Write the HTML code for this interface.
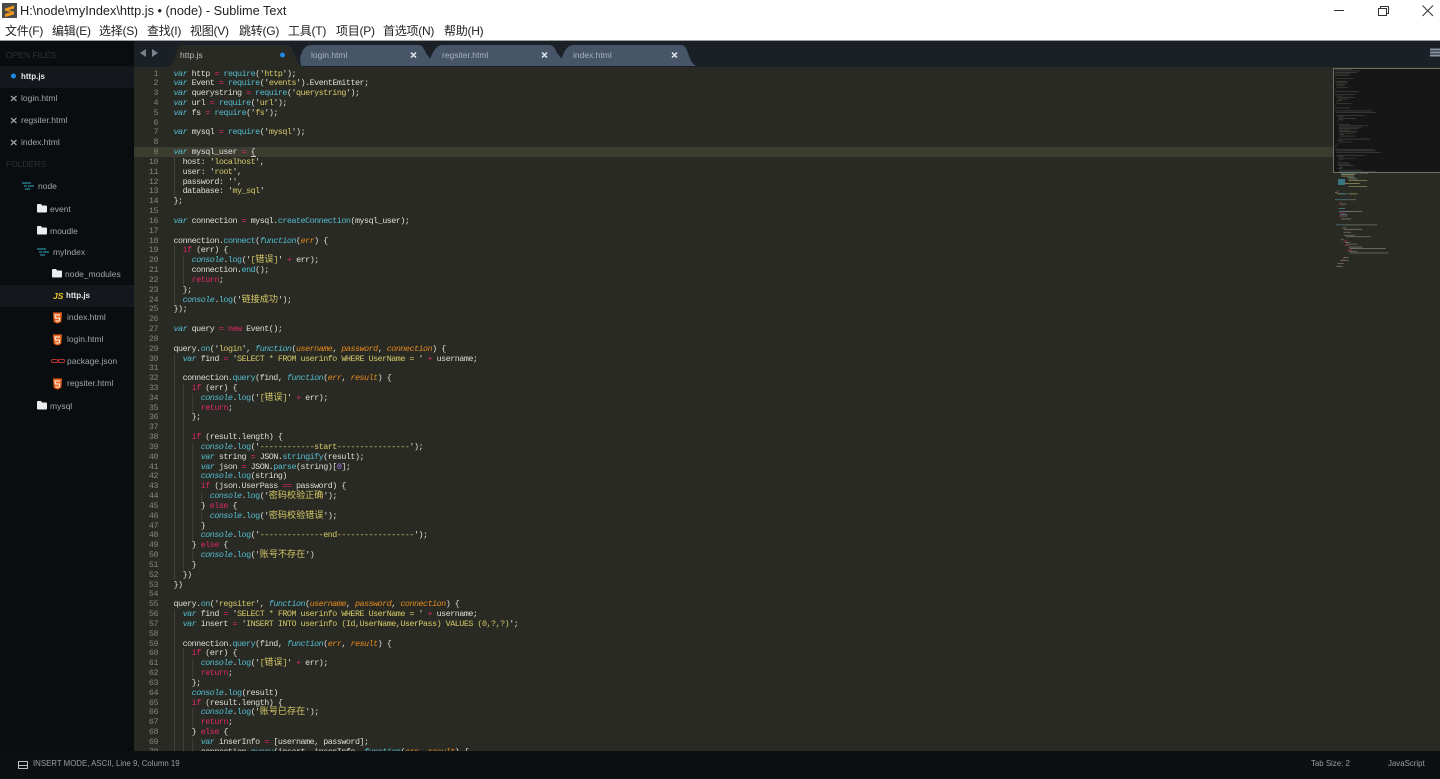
<!DOCTYPE html>
<html><head><meta charset="utf-8"><title>Sublime Text</title>
<style>
html,body{margin:0;padding:0;width:1440px;height:779px;overflow:hidden;background:#2a2a24;font-family:"Liberation Sans","Noto Sans CJK SC",sans-serif}
.a{position:absolute;white-space:nowrap}
#top{position:absolute;left:0;top:0;width:1440px;height:40px;background:#fff;border-bottom:1px solid #9a9c9e}
.m{position:absolute;top:24px;font-size:12px;line-height:15px;color:#222;white-space:nowrap;letter-spacing:-.25px}
#side{position:absolute;left:0;top:41px;width:134px;height:710px;background:#0a0d10;overflow:hidden}
.r{position:absolute;left:0;width:134px;height:22px;background:#14181c}
.t{position:absolute;font-size:8.5px;line-height:12px;color:#a2a6a8;white-space:nowrap}
.h{position:absolute;font-size:8.5px;line-height:12px;color:#2c3238;white-space:nowrap}
#tabs{position:absolute;left:134px;top:41px;width:1306px;height:26px;background:#1a2026}
#code{position:absolute;left:134px;top:67px;width:1306px;height:684px;background:#2a2a24;overflow:hidden}
pre{margin:0;position:absolute;top:2.5px;font-family:"Liberation Mono","Noto Sans CJK SC",monospace;font-size:8.4px;letter-spacing:-.49px;line-height:9.83px}
#nums{left:0;width:24px;text-align:right;color:#85857c}
#src{left:39.5px;color:#dededa}
pre s{text-decoration:none;color:#d4c968}
pre b{font-weight:normal;color:#dc2868}
pre u{text-decoration:none;color:#52bcd0}
pre i{color:#52bcd0}
pre q{quotes:none;font-style:italic;color:#e48a1c}
pre em{font-style:normal;font-size:9.1px;letter-spacing:0;line-height:0}
#st{position:absolute;left:0;top:751px;width:1440px;height:28px;background:#0c1013}
.st{position:absolute;top:7px;font-size:7.85px;line-height:12px;color:#9a9ea0;white-space:nowrap}
.tn{position:absolute;top:8px;font-size:8.5px;line-height:12px;color:#a9b1bc;white-space:nowrap}
</style></head><body>
<div id="top">
<svg class="a" style="left:2px;top:3px" width="15" height="15" viewBox="0 0 15 15"><rect width="15" height="15" fill="#4a4a4a"/><path d="M3 5.500 12 2.500V5.500L6.500 7.200 12 8.800V11.500L3 14V11L8.500 9.200 3 7.600Z" fill="#f09a1c"/></svg>
<div class="a" style="left:20px;top:3px;font-size:12.75px;line-height:16px;color:#222">H:\node\myIndex\http.js • (node) - Sublime Text</div>
<div class="m" style="left:5px">文件(F)</div><div class="m" style="left:52px">编辑(E)</div><div class="m" style="left:99px">选择(S)</div><div class="m" style="left:147px">查找(I)</div><div class="m" style="left:190px">视图(V)</div><div class="m" style="left:239px">跳转(G)</div><div class="m" style="left:288px">工具(T)</div><div class="m" style="left:336px">项目(P)</div><div class="m" style="left:383px">首选项(N)</div><div class="m" style="left:444px">帮助(H)</div>
<svg class="a" style="left:1330px;top:0" width="110" height="20" viewBox="0 0 110 20" fill="none" stroke="#333" stroke-width="1"><path d="M4 10.500H14"/><path d="M48.500 8.500H56.500V15.500H48.500ZM50.500 8V6.500H58.500V13.500H57"/><path d="M92.500 5.500 103 16M103 5.500 92.500 16"/></svg>
</div>

<div id="side">
<div class="h" style="left:6px;top:8px">OPEN FILES</div>
<div class="r" style="top:25px"></div>
<svg class="a" style="left:0;top:0" width="134" height="710" viewBox="0 0 134 710">
<circle cx="13.500" cy="35" r="2.500" fill="#1e88e5"/>
<path d="M11 55 16.500 60M16.500 55 11 60M11 77 16.500 82M16.500 77 11 82M11 99 16.500 104M16.500 99 11 104" stroke="#a0a4a8" stroke-width="1.200" fill="none"/>
</svg>
<div class="t" style="left:21px;top:30px;color:#e6e8ea;font-weight:bold;font-size:8px">http.js</div>
<div class="t" style="left:21px;top:51px">login.html</div>
<div class="t" style="left:21px;top:73px">regsiter.html</div>
<div class="t" style="left:21px;top:95px">index.html</div>
<div class="h" style="left:6px;top:117px">FOLDERS</div>
<div class="r" style="top:244px"></div>
<svg class="a" style="left:0;top:0" width="134" height="710" viewBox="0 0 134 710">
<path d="M22 142h9M24 145h3M28 145h6M25 148h5" stroke="#2a8a9c" stroke-width="1.300" fill="none"/>
<path d="M37 164q0-1 1-1h3l1 1.500h4q1 0 1 1v5q0 1-1 1h-8q-1 0-1-1ZM37 186q0-1 1-1h3l1 1.500h4q1 0 1 1v5q0 1-1 1h-8q-1 0-1-1ZM52 229q0-1 1-1h3l1 1.500h4q1 0 1 1v5q0 1-1 1h-8q-1 0-1-1ZM37 361q0-1 1-1h3l1 1.500h4q1 0 1 1v5q0 1-1 1h-8q-1 0-1-1Z" fill="#ececec"/>
<path d="M37 208h9M39 211h3M43 211h6M40 214h5" stroke="#2a8a9c" stroke-width="1.300" fill="none"/>
<path d="M53 271.500h9l-.8 9.500-3.700 1.500-3.700-1.500ZM53 293.500h9l-.8 9.500-3.700 1.500-3.700-1.500ZM53 337.500h9l-.8 9.500-3.700 1.500-3.700-1.500Z" fill="#e8641c"/>
<path d="M60 274h-5l.3 3h4.400l-.3 2.600-1.900.7-1.900-.7M60 296h-5l.3 3h4.400l-.3 2.600-1.900.7-1.900-.7M60 340h-5l.3 3h4.400l-.3 2.600-1.900.7-1.900-.7" fill="none" stroke="#fff" stroke-width=".9"/>
<path d="M52 318.500h5q1 1 0 3h-5q-1-2 0-3ZM59 318.500h5q1 1 0 3h-5q-1-2 0-3Z" fill="none" stroke="#b0322e" stroke-width="1.100"/>
<path d="M57 320h2" stroke="#b0322e" stroke-width="1"/>
</svg>
<div class="a" style="left:53px;top:249px;font-size:8.5px;line-height:12px;font-weight:bold;font-style:italic;color:#e8c92c">JS</div>
<div class="t" style="left:38px;top:139px">node</div>
<div class="t" style="left:50px;top:162px">event</div>
<div class="t" style="left:50px;top:184px">moudle</div>
<div class="t" style="left:53px;top:205px">myIndex</div>
<div class="t" style="left:65px;top:227px">node_modules</div>
<div class="t" style="left:66px;top:249px;color:#e6e8ea;font-weight:bold;font-size:8px">http.js</div>
<div class="t" style="left:67px;top:270px">index.html</div>
<div class="t" style="left:67px;top:292px">login.html</div>
<div class="t" style="left:67px;top:314px">package.json</div>
<div class="t" style="left:67px;top:336px">regsiter.html</div>
<div class="t" style="left:50px;top:359px">mysql</div>
</div>

<div id="tabs">
<svg class="a" style="left:0;top:0" width="1306" height="26" viewBox="0 0 1306 26">
<path d="M5 11 11 7V15ZM23 11 17 7V15Z" fill="#79828c" transform="translate(1 1)"/>
<path d="M167 25 166 17C168 10 170 4 178 4H284C289 4 290 8 292 12L296 17.500 298 25Z" fill="#475569"/>
<path d="M296 25V17.500C299 12 301 4 309 4H415C420 4 421 8 423 12L427.500 17.500V25Z" fill="#475569"/>
<path d="M427.500 25V17.500C430 12 432 4 440 4H546C551 4 552 7 554 12C556 18 558 24 563 25Z" fill="#475569"/>
<path d="M33 26C38 25 40 20 42 13C43 8 45 4 50 4H152C156 4 158 7 160 12C162 18 164 24 169 26Z" fill="#2a2a24"/>
<circle cx="148.500" cy="14" r="2.500" fill="#1e88e5"/>
<path d="M277 11.500 282 16.500M282 11.500 277 16.500M408 11.500 413 16.500M413 11.500 408 16.500M538 11.500 543 16.500M543 11.500 538 16.500" stroke="#e8ecf0" stroke-width="1.500" fill="none"/>
<path d="M1296 8.500h10M1296 11.500h10M1296 14.500h10" stroke="#8a94a0" stroke-width="2" fill="none"/>
</svg>
<div class="t" style="left:46px;top:8px;color:#b8bcbc">http.js</div>
<div class="tn" style="left:177px">login.html</div>
<div class="tn" style="left:308px">regsiter.html</div>
<div class="tn" style="left:439px">index.html</div>
</div>

<div id="code">
<div class="a" style="left:0;top:80px;width:1306px;height:10px;background:#3c3c30"></div>
<div class="a" style="left:117px;top:89px;width:5px;height:1px;background:#c8c8b8"></div>
<svg class="a" style="left:39.500px;top:2px" width="60" height="684" viewBox="0 0 60 684"><g transform="translate(.5 0) scale(4.55 9.83)" fill="none" stroke="#42423a" stroke-width=".22"><path d="M0 9V13M0 18V24M0 29V52M0 55V70M2 19V22M2 32V51M2 59V70M4 33V35M4 38V48M4 49V50M4 60V62M4 65V67M4 68V70M6 43V44M6 45V46"/></g></svg>
<pre id="nums">1
2
3
4
5
6
7
8
9
10
11
12
13
14
15
16
17
18
19
20
21
22
23
24
25
26
27
28
29
30
31
32
33
34
35
36
37
38
39
40
41
42
43
44
45
46
47
48
49
50
51
52
53
54
55
56
57
58
59
60
61
62
63
64
65
66
67
68
69
70</pre>
<pre id="src"><i>var</i> http <b>=</b> <u>require</u>('<s>http</s>');
<i>var</i> Event <b>=</b> <u>require</u>('<s>events</s>').EventEmitter;
<i>var</i> querystring <b>=</b> <u>require</u>('<s>querystring</s>');
<i>var</i> url <b>=</b> <u>require</u>('<s>url</s>');
<i>var</i> fs <b>=</b> <u>require</u>('<s>fs</s>');

<i>var</i> mysql <b>=</b> <u>require</u>('<s>mysql</s>');

<i>var</i> mysql_user <b>=</b> {
  host: '<s>localhost</s>',
  user: '<s>root</s>',
  password: '',
  database: '<s>my_sql</s>'
};

<i>var</i> connection <b>=</b> mysql.<u>createConnection</u>(mysql_user);

connection.<u>connect</u>(<i>function</i>(<q>err</q>) {
  <b>if</b> (err) {
    <i>console</i>.<u>log</u>('<s>[<em>错误</em>]</s>' <b>+</b> err);
    connection.<u>end</u>();
    <b>return</b>;
  };
  <i>console</i>.<u>log</u>('<s><em>链接成功</em></s>');
});

<i>var</i> query <b>=</b> <b>new</b> Event();

query.<u>on</u>('<s>login</s>', <i>function</i>(<q>username</q>, <q>password</q>, <q>connection</q>) {
  <i>var</i> find <b>=</b> '<s>SELECT * FROM userinfo WHERE UserName = </s>' <b>+</b> username;

  connection.<u>query</u>(find, <i>function</i>(<q>err</q>, <q>result</q>) {
    <b>if</b> (err) {
      <i>console</i>.<u>log</u>('<s>[<em>错误</em>]</s>' <b>+</b> err);
      <b>return</b>;
    };

    <b>if</b> (result.length) {
      <i>console</i>.<u>log</u>('<s>------------start----------------</s>');
      <i>var</i> string <b>=</b> JSON.<u>stringify</u>(result);
      <i>var</i> json <b>=</b> JSON.<u>parse</u>(string)[<span style="color:#ae81ff">0</span>];
      <i>console</i>.<u>log</u>(string)
      <b>if</b> (json.UserPass <b>==</b> password) {
        <i>console</i>.<u>log</u>('<s><em>密码校验正确</em></s>');
      } <b>else</b> {
        <i>console</i>.<u>log</u>('<s><em>密码校验错误</em></s>');
      }
      <i>console</i>.<u>log</u>('<s>--------------end-----------------</s>');
    } <b>else</b> {
      <i>console</i>.<u>log</u>('<s><em>账号不存在</em></s>')
    }
  })
})

query.<u>on</u>('<s>regsiter</s>', <i>function</i>(<q>username</q>, <q>password</q>, <q>connection</q>) {
  <i>var</i> find <b>=</b> '<s>SELECT * FROM userinfo WHERE UserName = </s>' <b>+</b> username;
  <i>var</i> insert <b>=</b> '<s>INSERT INTO userinfo (Id,UserName,UserPass) VALUES (0,?,?)</s>';

  connection.<u>query</u>(find, <i>function</i>(<q>err</q>, <q>result</q>) {
    <b>if</b> (err) {
      <i>console</i>.<u>log</u>('<s>[<em>错误</em>]</s>' <b>+</b> err);
      <b>return</b>;
    };
    <i>console</i>.<u>log</u>(result)
    <b>if</b> (result.length) {
      <i>console</i>.<u>log</u>('<s><em>账号已存在</em></s>');
      <b>return</b>;
    } <b>else</b> {
      <i>var</i> inserInfo <b>=</b> [username, password];
      connection.<u>query</u>(insert, inserInfo, <i>function</i>(<q>err</q>, <q>result</q>) {</pre>
<div class="a" style="left:1199px;top:1px;width:107px;height:105px;background:#161616;border:1px solid #6e6e62;border-right:0;box-sizing:border-box"></div>
<svg class="a" style="left:1199px;top:0" width="107" height="200" viewBox="0 0 107 200">
<rect x="5" y="112" width="7" height="6" fill="#3f8a98" opacity=".8"/>
<g transform="translate(2 1) scale(.62 1.48)" fill="none" stroke-width=".55">
<path stroke="#3e3e3a" d="M0 1h27M0 2h40M0 3h36M0 4h25M0 5h23M0 7h29M0 9h19M2 10h19M2 11h14M2 12h13M2 13h19M0 14h2M0 16h39M0 18h33M2 19h10M4 20h28M4 21h17M4 22h7M2 23h2M2 24h24M0 25h3M0 27h24M0 29h60M2 30h65M2 32h46M4 33h10M6 34h28M6 35h7M4 36h2M4 38h20M6 39h48M6 40h36M6 41h32M6 42h19M6 43h30M8 44h24M6 45h8M8 46h24M6 47h1M6 48h50M4 49h8M6 50h20M4 51h1M2 52h2M0 53h2M0 55h63M2 56h65M2 57h72M2 59h46M4 60h10M6 61h28M6 62h7M4 63h2M4 64h19M4 65h20M6 66h24M6 67h7M4 68h8M6 69h37M6 70h60"/>
<g opacity=".75">
<path stroke="#a8a86a" d="M10 72h22M10 73h20M22 75h14M22 76h30M16 78h24M22 80h30M0 84h4M3 85h12M22 85h14"/>
<path stroke="#5a9aa8" d="M8 71h30M20 74h12M6 85h14M0 89h24M6 95h10M6 97h22M8 99h12M2 106h30"/>
<path stroke="#8d8d80" d="M40 71h14M4 83h2M2 84h2M24 89h10M8 91h2M10 92h8M16 97h28M10 100h10M10 102h16M18 106h50M12 108h6M14 109h30M14 111h12M14 113h18M18 114h40M10 116h4M16 118h8M18 119h18M22 121h22M24 122h58M22 124h14M24 125h62M14 128h8M8 130h14M4 132h10M2 134h10M0 135h20"/>
<path stroke="#c82a62" d="M6 92h4M8 98h8M6 100h5M14 117h6M16 120h6M20 123h8M12 129h4"/>
</g></g></svg>
</div>

<div id="st">
<svg class="a" style="left:18px;top:9px" width="10" height="10" viewBox="0 0 10 10"><path d="M.5 1.500H9.500V8.500H.5ZM.5 5.500H9.500" fill="none" stroke="#b8bcc0" stroke-width="1.100"/></svg>
<div class="st" style="left:33px">INSERT MODE, ASCII, Line 9, Column 19</div>
<div class="st" style="left:1311px">Tab Size: 2</div>
<div class="st" style="left:1388px">JavaScript</div>
</div>
</body></html>
